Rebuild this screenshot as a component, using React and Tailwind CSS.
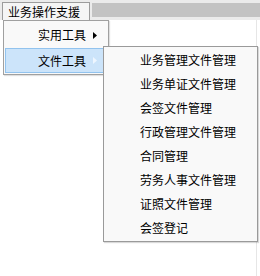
import React from "react";

const fileItems = [
  "业务管理文件管理",
  "业务单证文件管理",
  "会签文件管理",
  "行政管理文件管理",
  "合同管理",
  "劳务人事文件管理",
  "证照文件管理",
  "会签登记",
];

const Arrow = ({ color }) => (
  <svg width="4" height="7" viewBox="0 0 4 7" className="shrink-0">
    <path d="M0 0 L4 3.5 L0 7 Z" fill={color} />
  </svg>
);

export default function App() {
  return (
    <div
      className="relative w-[260px] h-[276px] overflow-hidden bg-white text-[12px] text-black"
      style={{ fontFamily: '"Noto Sans CJK SC", "Noto Sans", sans-serif' }}
    >
      {/* menu bar */}
      <div className="flex h-[20px] bg-[#ebebeb]">
        <div className="ml-[2px] mt-[2px] flex h-[18px] w-[88px] items-center border-x border-t border-[#9c9c9c] bg-[#f5f5f5] pl-[5px] leading-none">
          业务操作支援
        </div>
        <div className="ml-[2px] mt-[3px] h-[14px] flex-1 bg-[#c3c3c3]" />
      </div>

      {/* page area */}
      <div className="h-[256px] w-[257px] border-r border-[#e6e6e6]" />

      {/* first dropdown */}
      <div className="absolute left-[3px] top-[20px] flex w-[106px] flex-col border border-[#a0a0a0] bg-[#f9f9f9] px-[1px] py-[1px] shadow-[1px_1px_1px_rgba(0,0,0,0.12)]">
        <div className="flex h-[26px] items-center pl-[33px] pr-[10px]">
          <span className="flex-1 leading-none">实用工具</span>
          <Arrow color="#000" />
        </div>
        <div className="flex h-[25px] items-center border border-[#92c3ee] bg-[#cce4fa] pl-[32px] pr-[9px]">
          <span className="flex-1 leading-none">文件工具</span>
          <Arrow color="#eef6ff" />
        </div>
      </div>

      {/* submenu */}
      <div className="absolute left-[103px] top-[46px] flex w-[155px] flex-col border border-[#9a9a9a] bg-[#f9f9f9] py-[1px] shadow-[1px_1px_1px_rgba(0,0,0,0.15)]">
        {fileItems.map((t) => (
          <div key={t} className="flex h-[24px] items-center pl-[36px] leading-none">
            {t}
          </div>
        ))}
      </div>
    </div>
  );
}
